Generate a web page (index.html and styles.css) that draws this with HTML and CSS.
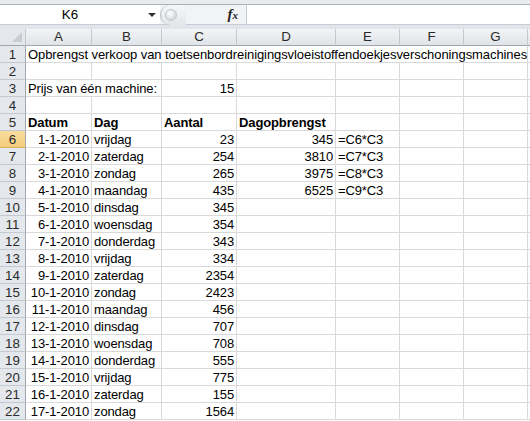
FILE: index.html
```html
<!DOCTYPE html>
<html>
<head>
<meta charset="utf-8">
<link rel="stylesheet" href="styles.css">
</head>
<body>
<div class="fbar">
  <div class="namebox"><span class="nbtext">K6</span><span class="dd"></span></div>
  <div class="mid">
    <div class="pill"><span class="knob"></span></div>
    <span class="fx">f<span class="fxx">x</span></span>
  </div>
  <div class="finput"></div>
</div>
<div class="sheet">
  <div class="corner"><span class="tri"></span></div>
  <div class="ch">A</div><div class="ch">B</div><div class="ch">C</div><div class="ch">D</div><div class="ch">E</div><div class="ch">F</div><div class="ch">G</div><div class="ch last"></div>

  <div class="rh">1</div><div class="c span7 title">Opbrengst verkoop van toetsenbordreinigingsvloeistoffendoekjesverschoningsmachines</div><div class="c last"></div>
  <div class="rh">2</div><div class="c"></div><div class="c"></div><div class="c"></div><div class="c"></div><div class="c"></div><div class="c"></div><div class="c"></div><div class="c last"></div>
  <div class="rh">3</div><div class="c span2">Prijs van één machine:</div><div class="c r">15</div><div class="c"></div><div class="c"></div><div class="c"></div><div class="c"></div><div class="c last"></div>
  <div class="rh">4</div><div class="c"></div><div class="c"></div><div class="c"></div><div class="c"></div><div class="c"></div><div class="c"></div><div class="c"></div><div class="c last"></div>
  <div class="rh">5</div><div class="c b">Datum</div><div class="c b">Dag</div><div class="c b">Aantal</div><div class="c b">Dagopbrengst</div><div class="c"></div><div class="c"></div><div class="c"></div><div class="c last"></div>
  <div class="rh sel">6</div><div class="c r">1-1-2010</div><div class="c">vrijdag</div><div class="c r">23</div><div class="c r">345</div><div class="c">=C6*C3</div><div class="c"></div><div class="c"></div><div class="c last"></div>
  <div class="rh">7</div><div class="c r">2-1-2010</div><div class="c">zaterdag</div><div class="c r">254</div><div class="c r">3810</div><div class="c">=C7*C3</div><div class="c"></div><div class="c"></div><div class="c last"></div>
  <div class="rh">8</div><div class="c r">3-1-2010</div><div class="c">zondag</div><div class="c r">265</div><div class="c r">3975</div><div class="c">=C8*C3</div><div class="c"></div><div class="c"></div><div class="c last"></div>
  <div class="rh">9</div><div class="c r">4-1-2010</div><div class="c">maandag</div><div class="c r">435</div><div class="c r">6525</div><div class="c">=C9*C3</div><div class="c"></div><div class="c"></div><div class="c last"></div>
  <div class="rh">10</div><div class="c r">5-1-2010</div><div class="c">dinsdag</div><div class="c r">345</div><div class="c"></div><div class="c"></div><div class="c"></div><div class="c"></div><div class="c last"></div>
  <div class="rh">11</div><div class="c r">6-1-2010</div><div class="c">woensdag</div><div class="c r">354</div><div class="c"></div><div class="c"></div><div class="c"></div><div class="c"></div><div class="c last"></div>
  <div class="rh">12</div><div class="c r">7-1-2010</div><div class="c">donderdag</div><div class="c r">343</div><div class="c"></div><div class="c"></div><div class="c"></div><div class="c"></div><div class="c last"></div>
  <div class="rh">13</div><div class="c r">8-1-2010</div><div class="c">vrijdag</div><div class="c r">334</div><div class="c"></div><div class="c"></div><div class="c"></div><div class="c"></div><div class="c last"></div>
  <div class="rh">14</div><div class="c r">9-1-2010</div><div class="c">zaterdag</div><div class="c r">2354</div><div class="c"></div><div class="c"></div><div class="c"></div><div class="c"></div><div class="c last"></div>
  <div class="rh">15</div><div class="c r">10-1-2010</div><div class="c">zondag</div><div class="c r">2423</div><div class="c"></div><div class="c"></div><div class="c"></div><div class="c"></div><div class="c last"></div>
  <div class="rh">16</div><div class="c r">11-1-2010</div><div class="c">maandag</div><div class="c r">456</div><div class="c"></div><div class="c"></div><div class="c"></div><div class="c"></div><div class="c last"></div>
  <div class="rh">17</div><div class="c r">12-1-2010</div><div class="c">dinsdag</div><div class="c r">707</div><div class="c"></div><div class="c"></div><div class="c"></div><div class="c"></div><div class="c last"></div>
  <div class="rh">18</div><div class="c r">13-1-2010</div><div class="c">woensdag</div><div class="c r">708</div><div class="c"></div><div class="c"></div><div class="c"></div><div class="c"></div><div class="c last"></div>
  <div class="rh">19</div><div class="c r">14-1-2010</div><div class="c">donderdag</div><div class="c r">555</div><div class="c"></div><div class="c"></div><div class="c"></div><div class="c"></div><div class="c last"></div>
  <div class="rh">20</div><div class="c r">15-1-2010</div><div class="c">vrijdag</div><div class="c r">775</div><div class="c"></div><div class="c"></div><div class="c"></div><div class="c"></div><div class="c last"></div>
  <div class="rh">21</div><div class="c r">16-1-2010</div><div class="c">zaterdag</div><div class="c r">155</div><div class="c"></div><div class="c"></div><div class="c"></div><div class="c"></div><div class="c last"></div>
  <div class="rh">22</div><div class="c r">17-1-2010</div><div class="c">zondag</div><div class="c r">1564</div><div class="c"></div><div class="c"></div><div class="c"></div><div class="c"></div><div class="c last"></div>
</div>
</body>
</html>
```
FILE: styles.css
```css
html, body {
  margin: 0;
  padding: 0;
  background: #ffffff;
  font-family: "Liberation Sans", Arial, sans-serif;
}

.fbar {
  height: 29px;
  box-sizing: border-box;
  background: #e2e6ea;
  border-top: 4px solid #e9ecef;
  display: flex;
  align-items: stretch;
  padding-bottom: 4px;
}

.namebox {
  width: 160px;
  background: #ffffff;
  border-top: 1px solid #a9b0b8;
  border-bottom: 1px solid #c8cdd3;
  box-sizing: border-box;
  position: relative;
  display: flex;
  align-items: center;
  justify-content: center;
  font-size: 13.33px;
  color: #000;
}

.nbtext {
  margin-left: -20px;
}

.dd {
  position: absolute;
  right: 4px;
  top: 8px;
  width: 0;
  height: 0;
  border-left: 4px solid transparent;
  border-right: 4px solid transparent;
  border-top: 4px solid #333;
}

.mid {
  width: 86px;
  display: flex;
  align-items: center;
  justify-content: space-between;
  border-top: 1px solid #a9b0b8;
  border-bottom: 1px solid #c8cdd3;
  box-sizing: border-box;
  background: #f2f3f5;
}

.pill {
  width: 26px;
  height: 20px;
  border-radius: 11px 0 0 11px;
  background: linear-gradient(#f6f7f8, #e3e6ea);
  border-left: 1px solid #b4bac1;
  display: flex;
  align-items: center;
  padding-left: 4px;
  box-sizing: border-box;
}

.knob {
  width: 10px;
  height: 10px;
  border-radius: 50%;
  background: radial-gradient(circle at 40% 35%, #ffffff, #c6cbd1);
  border: 1px solid #c1c6cc;
}

.fx {
  font-family: "Liberation Serif", "Times New Roman", serif;
  font-style: italic;
  font-weight: bold;
  font-size: 15px;
  color: #222;
  margin-right: 8px;
}

.fxx {
  font-size: 11px;
}

.finput {
  flex: 1;
  background: #ffffff;
  border-top: 1px solid #a9b0b8;
  border-bottom: 1px solid #c8cdd3;
  border-left: 1px solid #c8cdd3;
  box-sizing: border-box;
}

.sheet {
  display: grid;
  grid-template-columns: 26px 66px 70px 75px 99px 64px 64px 64px 1fr;
  grid-auto-rows: 17px;
  font-size: 13px;
  letter-spacing: -0.12px;
  color: #000;
}

.corner {
  background: #e4e7eb;
  border-right: 1px solid #c4c9cf;
  border-bottom: 1px solid #9fa6ae;
  box-sizing: border-box;
  position: relative;
}

.tri {
  position: absolute;
  right: 3px;
  bottom: 3px;
  width: 0;
  height: 0;
  border-left: 10px solid transparent;
  border-bottom: 10px solid #c9ced4;
}

.ch {
  background: linear-gradient(#f3f4f6, #e0e3e7);
  border-right: 1px solid #c4c9cf;
  border-bottom: 1px solid #9fa6ae;
  box-sizing: border-box;
  text-align: center;
  line-height: 16px;
  color: #2b2b2b;
  font-size: 13.33px;
  letter-spacing: 0;
}

.rh {
  background: #e4e7eb;
  border-right: 1px solid #9fa6ae;
  border-bottom: 1px solid #c4c9cf;
  box-sizing: border-box;
  text-align: center;
  line-height: 17px;
  color: #2b2b2b;
  font-size: 13.33px;
  letter-spacing: 0;
}

.rh.sel {
  background: linear-gradient(#f9dd9f, #f4cd7c);
  border-bottom-color: #d9ae5b;
}

.c {
  border-right: 1px solid #d9d9d9;
  border-bottom: 1px solid #d9d9d9;
  box-sizing: border-box;
  padding: 0 2px;
  line-height: 17px;
  white-space: nowrap;
  overflow: visible;
}

.c.r {
  text-align: right;
}

.c.b {
  font-weight: bold;
}

.title {
  letter-spacing: -0.08px;
}

.span7 {
  grid-column: span 7;
}

.span2 {
  grid-column: span 2;
}

.last {
  border-right: none;
}
```
